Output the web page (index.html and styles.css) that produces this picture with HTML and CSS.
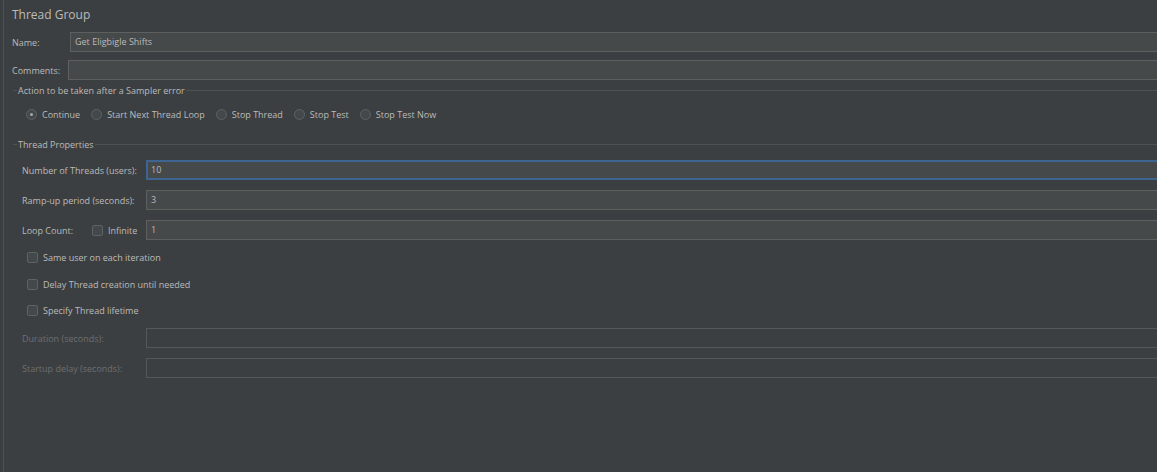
FILE: index.html
```html
<!DOCTYPE html>
<html>
<head>
<meta charset="utf-8">
<link rel="stylesheet" href="styles.css">
</head>
<body>
<div class="panel">
  <div class="title">Thread Group</div>

  <div class="row name-row">
    <span class="lbl">Name:</span>
    <div class="field name-field">Get Eligbigle Shifts</div>
  </div>
  <div class="row comments-row">
    <span class="lbl">Comments:</span>
    <div class="field comments-field"></div>
  </div>

  <div class="legend legend-action">
    <span class="legend-dash"></span>
    <span class="legend-text">Action to be taken after a Sampler error</span>
    <span class="legend-line"></span>
  </div>
  <div class="radios">
    <label class="radio"><span class="circle selected"></span><span>Continue</span></label>
    <label class="radio"><span class="circle"></span><span>Start Next Thread Loop</span></label>
    <label class="radio"><span class="circle"></span><span>Stop Thread</span></label>
    <label class="radio"><span class="circle"></span><span>Stop Test</span></label>
    <label class="radio"><span class="circle"></span><span>Stop Test Now</span></label>
  </div>

  <div class="legend legend-props">
    <span class="legend-dash"></span>
    <span class="legend-text">Thread Properties</span>
    <span class="legend-line"></span>
  </div>
  <div class="props">
    <div class="prow first">
      <span class="plbl">Number of Threads (users):</span>
      <div class="field focused">10</div>
    </div>
    <div class="prow">
      <span class="plbl">Ramp-up period (seconds):</span>
      <div class="field">3</div>
    </div>
    <div class="prow">
      <span class="plbl loop"><span class="loop-text">Loop Count:</span><span class="check"></span><span class="inf">Infinite</span></span>
      <div class="field">1</div>
    </div>
    <div class="crow first-c"><span class="check"></span><span>Same user on each iteration</span></div>
    <div class="crow c2"><span class="check"></span><span>Delay Thread creation until needed</span></div>
    <div class="crow"><span class="check"></span><span>Specify Thread lifetime</span></div>
    <div class="prow disabled first-d">
      <span class="plbl">Duration (seconds):</span>
      <div class="field off"></div>
    </div>
    <div class="prow disabled">
      <span class="plbl">Startup delay (seconds):</span>
      <div class="field off"></div>
    </div>
  </div>
</div>
</body>
</html>
```

FILE: styles.css
```css
html, body {
  margin: 0;
  padding: 0;
  height: 100%;
  background: #3c3f41;
  overflow: hidden;
}
body {
  font-family: "Open Sans", "Noto Sans", sans-serif;
  font-size: 9px;
  color: #bbbbbb;
}
.panel {
  margin-left: 3px;
  border-left: 1px solid #4e5254;
  height: 100%;
  padding-left: 8px;
  box-sizing: border-box;
}
.title {
  font-size: 12px;
  line-height: 16px;
  padding-top: 7px;
  height: 16px;
  color: #bbbbbb;
}
.row {
  display: flex;
  align-items: center;
  height: 20px;
}
.name-row { margin-top: 9px; }
.comments-row { margin-top: 8px; }
.lbl { white-space: nowrap; }
.name-row .lbl { width: 58px; }
.comments-row .lbl { width: 56px; }
.field {
  flex: 1;
  height: 20px;
  box-sizing: border-box;
  background: #45494a;
  border: 1px solid #5e6060;
  border-right: none;
  padding-left: 4px;
  line-height: 18px;
  color: #bbbbbb;
}
.legend {
  display: flex;
  align-items: center;
  height: 12px;
}
.legend-action { margin-top: 4px; }
.legend-props { margin-top: 14px; }
.legend-dash {
  width: 4px;
  height: 1px;
  background: #4e5254;
  margin-left: 1px;
}
.legend-text {
  padding: 0 1px;
  white-space: nowrap;
}
.legend-line {
  flex: 1;
  height: 1px;
  background: #4e5254;
}
.radios {
  display: flex;
  align-items: center;
  height: 20px;
  margin-top: 8px;
  padding-left: 14px;
  gap: 11px;
}
.radio {
  display: flex;
  align-items: center;
  gap: 5px;
  white-space: nowrap;
}
.circle {
  width: 11px;
  height: 11px;
  box-sizing: border-box;
  border-radius: 50%;
  border: 1px solid #5f6263;
  background: #43494a;
  position: relative;
}
.circle.selected::after {
  content: "";
  position: absolute;
  left: 3px;
  top: 3px;
  width: 3px;
  height: 3px;
  border-radius: 50%;
  background: #a9a9a9;
}
.props { padding-left: 10px; }
.prow {
  display: flex;
  align-items: center;
  height: 20px;
  margin-top: 10px;
}
.prow.first { margin-top: 10px; }
.plbl {
  width: 124px;
  white-space: nowrap;
  display: flex;
  align-items: center;
}
.loop-text { width: 70px; }
.inf { margin-left: 5px; }
.field.focused {
  border: 2px solid #3e6591;
  border-right: none;
  padding-left: 3px;
  line-height: 16px;
}
.check {
  width: 11px;
  height: 11px;
  box-sizing: border-box;
  border: 1px solid #5f6263;
  background: #43494a;
  border-radius: 2px;
  display: inline-block;
}
.crow {
  display: flex;
  align-items: center;
  gap: 5px;
  height: 16px;
  padding-left: 5px;
  margin-top: 10px;
}
.crow.first-c { margin-top: 9px; }
.crow.c2 { margin-top: 11px; }
.prow.first-d { margin-top: 10px; }
.disabled .plbl { color: #6c6e70; }
.field.off {
  background: #3c3f41;
  border-color: #555859;
}
```
